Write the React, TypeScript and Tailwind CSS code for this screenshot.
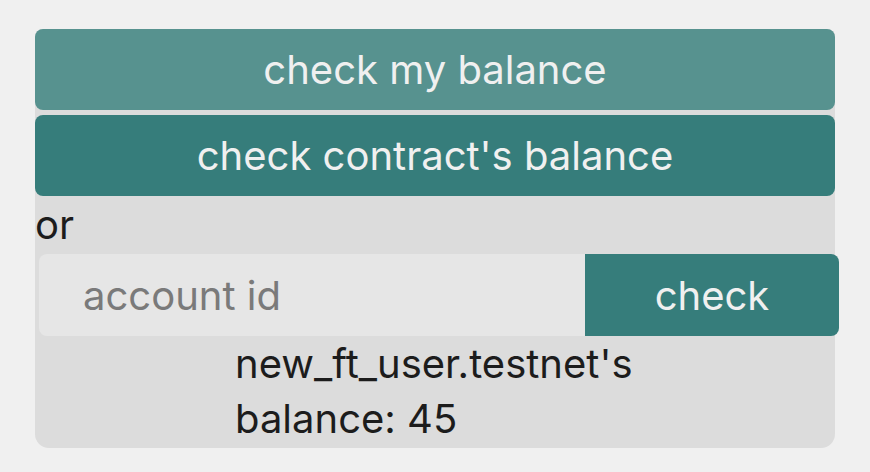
import { useState } from 'react';

export default function App() {
  const [accountId, setAccountId] = useState('');

  return (
    <div className="min-h-screen w-full bg-[#f0f0f0] pt-[29px] font-['Inter','Liberation_Sans',sans-serif] text-[40px] leading-[55px]">
      <div className="mx-auto flex w-[800px] flex-col rounded-b-[14px] rounded-t-[8px] bg-[#dcdcdc]">
        <button className="h-[81px] w-full rounded-[8px] bg-[#57928f] text-[#f0f0f0]">
          check my balance
        </button>
        <button className="mt-[5px] h-[81px] w-full rounded-[8px] bg-[#367d7b] text-[#f0f0f0]">
          check contract's balance
        </button>
        <div className="h-[58px] pt-[1px] text-[#1c1c1c]">or</div>
        <div className="ml-[4px] flex h-[82px] w-[800px]">
          <input
            value={accountId}
            onChange={(e) => setAccountId(e.target.value)}
            placeholder="account id"
            className="h-full w-[546px] rounded-l-[8px] bg-[#e6e6e6] pl-[44px] text-[#1c1c1c] outline-none placeholder:text-[#7a7a7a]"
          />
          <button className="h-full flex-1 rounded-r-[8px] bg-[#367d7b] text-[#f0f0f0]">
            check
          </button>
        </div>
        <p className="mx-auto w-[400px] pb-[2px] text-left text-[#1c1c1c]">
          new_ft_user.testnet's balance: 45
        </p>
      </div>
    </div>
  );
}
